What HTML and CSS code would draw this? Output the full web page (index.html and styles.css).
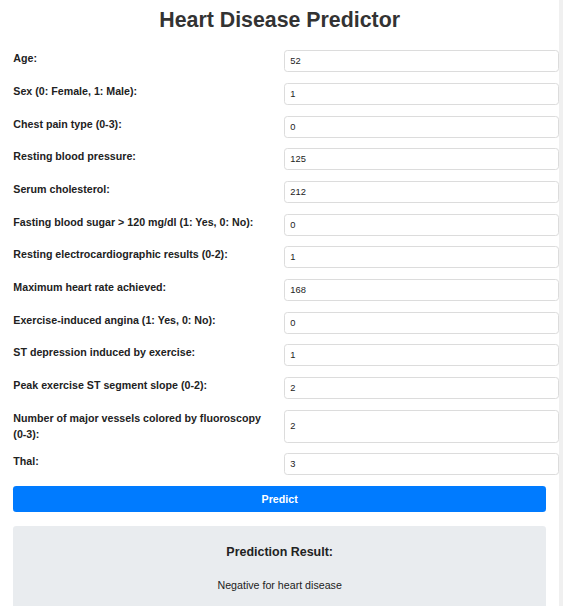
FILE: index.html
```html
<!DOCTYPE html>
<html lang="en">
<head>
<meta charset="utf-8">
<title>Heart Disease Predictor</title>
<link rel="stylesheet" href="styles.css">
</head>
<body>
<div class="container">
  <h1 class="title">Heart Disease Predictor</h1>
  <form class="form">
    <div class="row"><label class="label">Age:</label><input class="field" type="text" value="52"></div>
    <div class="row"><label class="label">Sex (0: Female, 1: Male):</label><input class="field" type="text" value="1"></div>
    <div class="row"><label class="label">Chest pain type (0-3):</label><input class="field" type="text" value="0"></div>
    <div class="row"><label class="label">Resting blood pressure:</label><input class="field" type="text" value="125"></div>
    <div class="row"><label class="label">Serum cholesterol:</label><input class="field" type="text" value="212"></div>
    <div class="row"><label class="label">Fasting blood sugar &gt; 120 mg/dl (1: Yes, 0: No):</label><input class="field" type="text" value="0"></div>
    <div class="row"><label class="label">Resting electrocardiographic results (0-2):</label><input class="field" type="text" value="1"></div>
    <div class="row"><label class="label">Maximum heart rate achieved:</label><input class="field" type="text" value="168"></div>
    <div class="row"><label class="label">Exercise-induced angina (1: Yes, 0: No):</label><input class="field" type="text" value="0"></div>
    <div class="row"><label class="label">ST depression induced by exercise:</label><input class="field" type="text" value="1"></div>
    <div class="row"><label class="label">Peak exercise ST segment slope (0-2):</label><input class="field" type="text" value="2"></div>
    <div class="row"><label class="label">Number of major vessels colored by fluoroscopy (0-3):</label><input class="field" type="text" value="2"></div>
    <div class="row"><label class="label">Thal:</label><input class="field" type="text" value="3"></div>
    <button class="predict" type="button">Predict</button>
  </form>
  <div class="result">
    <h3 class="result-title">Prediction Result:</h3>
    <p class="result-text">Negative for heart disease</p>
  </div>
</div>
</body>
</html>
```
FILE: styles.css
```css
html, body {
  margin: 0;
  padding: 0;
}
body {
  background: #f0f0f0;
  font-family: "Liberation Sans", Arial, sans-serif;
  color: #333;
}
.container {
  box-sizing: border-box;
  width: 559px;
  min-height: 640px;
  background: #ffffff;
  padding: 8px 13px 20px 13.33px;
}
.title {
  margin: 0 0 18.33px;
  font-size: 21.33px;
  line-height: 24px;
  font-weight: bold;
  text-align: center;
  color: #333;
}
.form {
  margin: 0;
}
.row {
  display: flex;
  align-items: stretch;
  margin-bottom: 10.67px;
}
.label {
  flex: 0 0 270.67px;
  box-sizing: border-box;
  padding-right: 11px;
  font-size: 10.67px;
  line-height: 16.6px;
  font-weight: bold;
  color: #222;
}
.field {
  flex: 0 0 274.67px;
  box-sizing: border-box;
  min-height: 22px;
  margin: 0;
  padding: 0 5.33px;
  border: 1px solid #dcdcdc;
  border-radius: 3.33px;
  font-family: "Liberation Sans", Arial, sans-serif;
  font-size: 9.33px;
  color: #222;
  background: #fff;
  outline: none;
}
.predict {
  display: block;
  width: 100%;
  height: 26px;
  margin: 0;
  padding: 0;
  border: none;
  border-radius: 3.33px;
  background: #007bff;
  color: #fff;
  font-family: "Liberation Sans", Arial, sans-serif;
  font-size: 10.67px;
  font-weight: bold;
}
.result {
  margin-top: 13.67px;
  padding: 13.33px 13.33px 13.33px;
  background: #e9ecef;
  border-radius: 3.33px;
  text-align: center;
}
.result-title {
  margin: 3.8px 0 15.5px;
  font-size: 12.48px;
  line-height: 18.7px;
  font-weight: bold;
  color: #222;
}
.result-text {
  margin: 0 0 10.67px;
  font-size: 10.67px;
  line-height: 16px;
  color: #222;
}
```
